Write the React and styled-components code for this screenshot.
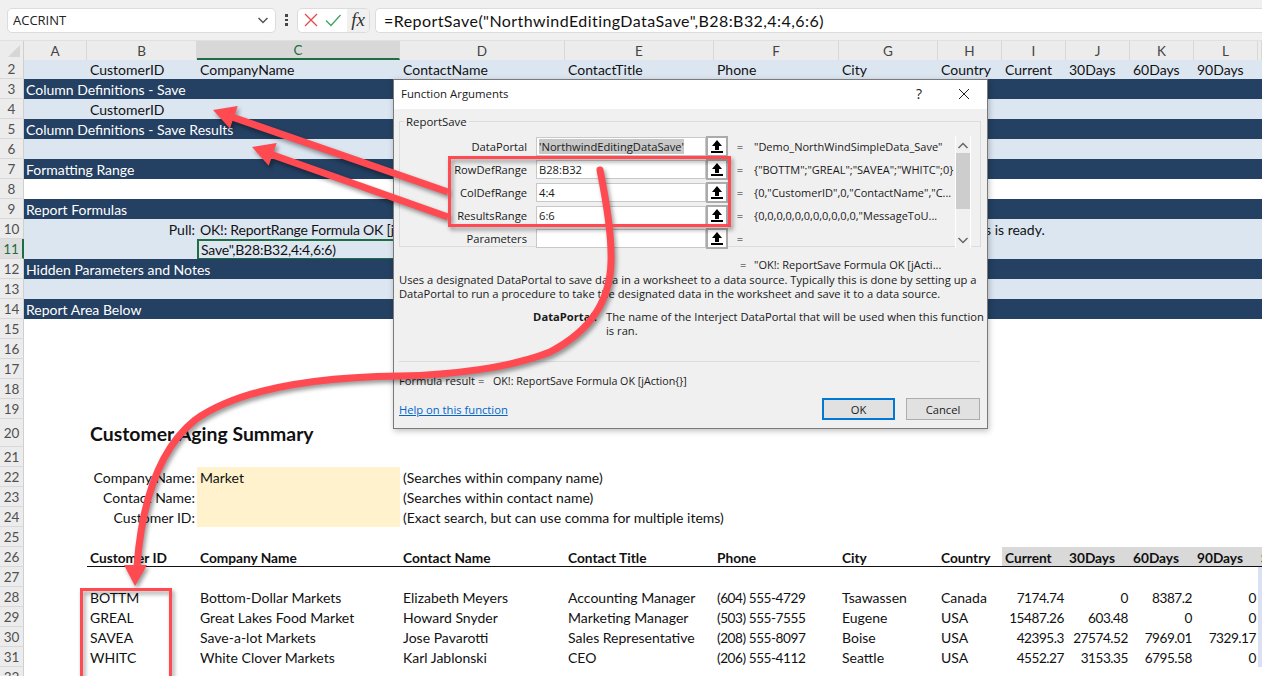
import React from "react";
import styled, { createGlobalStyle } from "styled-components";

const sheetFont = `"Lato", "Carlito", sans-serif`;
const uiFont = `"Open Sans", "Noto Sans", sans-serif`;

const GlobalStyle = createGlobalStyle`
  html, body {
    margin: 0;
    padding: 0;
    background: #fff;
  }
  #root {
    width: 1262px;
    height: 676px;
  }
`;

const Page = styled.div`
  position: relative;
  width: 1262px;
  height: 676px;
  overflow: hidden;
  background: #fff;
  font-family: ${sheetFont};
  font-size: 14px;
  color: #111;
`;

/* formula bar */

const FormulaBar = styled.div`
  display: flex;
  align-items: center;
  height: 40px;
  padding-left: 7px;
  background: #f0f0f0;
`;

const NameBox = styled.div`
  display: flex;
  align-items: center;
  justify-content: space-between;
  box-sizing: border-box;
  width: 269px;
  height: 25px;
  padding: 0 5px 0 5px;
  background: #fff;
  border: 1px solid #dcdcdc;
  border-radius: 5px;
  font-family: ${uiFont};
  font-size: 13px;
  color: #222;
`;

const MoreDots = styled.div`
  display: flex;
  flex-direction: column;
  gap: 2px;
  width: 21px;
  align-items: center;

  i {
    display: block;
    width: 2.5px;
    height: 2.5px;
    background: #444;
  }
`;

const EditButtons = styled.div`
  display: flex;
  align-items: center;
  box-sizing: border-box;
  width: 73px;
  height: 25px;
  padding-left: 5px;
  background: #fff;
  border: 1px solid #dcdcdc;
  border-radius: 5px;
  overflow: hidden;
`;

const EditIcon = styled.svg`
  width: 16px;
  height: 16px;
  margin-right: 6px;
  flex: none;
`;

const FxButton = styled.div`
  display: flex;
  align-items: center;
  justify-content: center;
  flex: 1;
  height: 100%;
  background: #f0f0f0;
  font-family: "Liberation Serif", serif;
  font-style: italic;
  font-size: 19px;
  color: #333;
`;

const FormulaInput = styled.div`
  display: flex;
  align-items: center;
  box-sizing: border-box;
  flex: 1;
  height: 25px;
  margin-left: 5px;
  padding-left: 8px;
  background: #fff;
  border: 1px solid #dcdcdc;
  border-right: 0;
  border-radius: 5px 0 0 5px;
  font-size: 16px;
  letter-spacing: 0.43px;
`;

/* worksheet */

const colTemplate = "63px 110px 203px 165px 149px 125px 99px 64px 64px 64px 64px 64px 1fr";

const ColumnHeads = styled.div`
  display: flex;
  height: 20px;
  background: #ececec;
  border-top: 1px solid #e0e0e0;
  box-sizing: border-box;
`;

const Corner = styled.div`
  position: relative;
  width: 24px;
  flex: none;
  border-right: 1px solid #cfcfcf;
  box-sizing: border-box;

  &::after {
    content: "";
    position: absolute;
    right: 3px;
    bottom: 3px;
    border-style: solid;
    border-width: 0 0 12px 12px;
    border-color: transparent transparent #d6d6d6 transparent;
  }
`;

const ColumnGrid = styled.div`
  flex: 1;
  display: grid;
  grid-template-columns: ${colTemplate};
`;

const ColumnHead = styled.div`
  display: flex;
  align-items: center;
  justify-content: center;
  box-sizing: border-box;
  border-right: 1px solid #d8d8d8;
  background: ${(p) => (p.$active ? "#d8d8d8" : "transparent")};
  color: ${(p) => (p.$active ? "#1f6e43" : "#444")};
  border-bottom: ${(p) => (p.$active ? "2px solid #1f6e43" : "0")};
  font-size: 13.5px;
`;

const RowLine = styled.div`
  display: flex;
  height: ${(p) => p.$h || 20}px;
`;

const RowNum = styled.div`
  display: flex;
  align-items: center;
  justify-content: center;
  box-sizing: border-box;
  width: 24px;
  flex: none;
  background: ${(p) => (p.$active ? "#dedede" : "#ececec")};
  border-bottom: 1px solid #d8d8d8;
  border-right: ${(p) => (p.$active ? "2px solid #1f6e43" : "1px solid #cfcfcf")};
  color: ${(p) => (p.$active ? "#1f6e43" : "#505050")};
  font-size: 13.5px;
`;

const tones = {
  light: { bg: "#dce6f1", fg: "#111" },
  dark: { bg: "#244062", fg: "#fff" },
  plain: { bg: "#fff", fg: "#111" },
};

const CellGrid = styled.div`
  flex: 1;
  display: grid;
  grid-template-columns: ${colTemplate};
  background: ${(p) => tones[p.$tone || "plain"].bg};
  color: ${(p) => tones[p.$tone || "plain"].fg};
`;

const Cell = styled.div`
  grid-column: ${(p) => p.$col} / span ${(p) => p.$span || 1};
  grid-row: 1;
  display: flex;
  align-items: center;
  justify-content: ${(p) => (p.$right ? "flex-end" : "flex-start")};
  box-sizing: border-box;
  min-width: 0;
  padding: 1px 2px 0 3px;
  white-space: nowrap;
  letter-spacing: ${(p) => (p.$tight ? "-0.45px" : "0")};
  font-size: ${(p) => (p.$tight ? "13.6px" : "inherit")};
`;

const FieldCell = styled(Cell)`
  padding-top: 0;
`;

const BandCell = styled(Cell)`
  padding-left: 2px;
`;

const PullCell = styled(Cell)`
  letter-spacing: -0.2px;
`;

const TailCell = styled(Cell)`
  padding-left: 47px;
`;

const InputCell = styled(Cell)`
  background: #fff2cc;
`;

const SelectedCell = styled(Cell)`
  border: 2px solid #1f6e43;
  padding: 0 0 0 2px;
  letter-spacing: -0.2px;
`;

const Title = styled(Cell)`
  font-weight: 700;
  font-size: 19.4px;
`;

const HeaderCell = styled(Cell)`
  padding-top: 2px;
  font-weight: 700;
  font-size: 13.7px;
  border-bottom: 1px solid #111;
  background: ${(p) => (p.$shaded ? "#d9d9d9" : "transparent")};
  overflow: hidden;
`;

const Sliver = styled(Cell)`
  background: #d9e1f2;
  padding: 0;
`;

/* function arguments dialog */

const Dialog = styled.div`
  position: absolute;
  left: 393px;
  top: 79px;
  box-sizing: border-box;
  width: 595px;
  height: 350px;
  background: #f0f0f0;
  border: 1px solid #7a7a7a;
  box-shadow: 1px 2px 6px rgba(0, 0, 0, 0.25);
  font-family: ${uiFont};
  font-size: 11.2px;
  color: #1a1a1a;
`;

const TitleBar = styled.div`
  display: flex;
  align-items: center;
  justify-content: space-between;
  box-sizing: border-box;
  height: 29px;
  padding: 0 17px 2px 7px;
  background: #fff;
  font-size: 11.4px;
`;

const TitleTools = styled.div`
  display: flex;
  align-items: center;
  gap: 36px;
  font-size: 14px;
`;

const ArgsBox = styled.fieldset`
  position: relative;
  box-sizing: border-box;
  width: 582px;
  height: 133px;
  margin: 5px 0 0 5px;
  padding: 6px 0 0;
  border: 1px solid #dcdcdc;

  legend {
    margin-left: 4px;
    padding: 0 2px;
    font-size: 11.4px;
  }
`;

const ArgRow = styled.div`
  display: grid;
  grid-template-columns: 136px 170px 22px 26px 1fr;
  align-items: center;
  height: 23px;
`;

const ArgLabel = styled.div`
  padding-right: 9px;
  text-align: right;
  white-space: nowrap;
`;

const ArgInput = styled.div`
  box-sizing: border-box;
  height: 19px;
  padding: 0 2px;
  background: #fff;
  border: 1px solid #c8c8c8;
  line-height: 17px;
  white-space: nowrap;
  overflow: hidden;
`;

const Selection = styled.span`
  background: #c8c8c8;
`;

const RefButton = styled.div`
  display: flex;
  align-items: center;
  justify-content: center;
  box-sizing: border-box;
  height: 21px;
  background: #fff;
  border: 2px solid #ababab;
`;

const EqualSign = styled.div`
  text-align: center;
  transform: translateX(-1px);
`;

const ArgValue = styled.div`
  white-space: nowrap;
  font-size: 11px;
`;

const ScrollTrack = styled.div`
  position: absolute;
  left: 555px;
  top: 7px;
  display: flex;
  flex-direction: column;
  justify-content: space-between;
  align-items: center;
  box-sizing: border-box;
  width: 16px;
  height: 112px;
  padding: 3px 0 1px;
  background: #f0f0f0;
  border-left: 1px solid #fff;
  border-right: 1px solid #fff;
`;

const ScrollThumb = styled.div`
  position: absolute;
  left: 0;
  top: 17px;
  width: 14px;
  height: 56px;
  background: #cdcdcd;
`;

const ResultLine = styled.div`
  display: grid;
  grid-template-columns: 340px 14px 1fr;
  margin: 10px 0 0 6px;
  height: 16px;
  line-height: 16px;
  white-space: nowrap;
  font-size: 11px;
`;

const Description = styled.p`
  margin: 0;
  padding: 0 0 0 5px;
  line-height: 14px;
`;

const HelpBlock = styled.div`
  display: grid;
  grid-template-columns: 203px 1fr;
  column-gap: 9px;
  margin-top: 9px;
  line-height: 14px;
  white-space: nowrap;

  b {
    text-align: right;
  }
`;

const Divider = styled.div`
  height: 1px;
  margin: 23px 7px 0 5px;
  background: #dcdcdc;
`;

const FormulaResult = styled.div`
  display: grid;
  grid-template-columns: 94px 1fr;
  margin: 12px 0 0 5px;
  line-height: 14px;
`;

const ResultText = styled.span`
  font-size: 10.7px;
`;

const Footer = styled.div`
  display: flex;
  align-items: center;
  margin: 10px 7px 0 5px;
`;

const HelpLink = styled.a`
  flex: 1;
  color: #0066cc;
  text-decoration: underline;
`;

const Button = styled.div`
  display: flex;
  align-items: center;
  justify-content: center;
  box-sizing: border-box;
  width: ${(p) => (p.$primary ? 73 : 74)}px;
  height: 22px;
  margin-left: ${(p) => (p.$primary ? 0 : 11)}px;
  background: #e1e1e1;
  border: ${(p) => (p.$primary ? "2px solid #0078d4" : "1px solid #adadad")};
`;

/* callouts drawn over the sheet */

const Callouts = styled.svg`
  position: absolute;
  left: 0;
  top: 0;
  width: 1262px;
  height: 676px;
  pointer-events: none;
  filter: drop-shadow(2px 3px 2px rgba(0, 0, 0, 0.4));
`;

const RED = "#ff4a52";

const RefArrow = () => (
  <svg width="14" height="15" viewBox="0 0 14 15">
    <path d="M7 1 L12 7 H9 V11 H5 V7 H2 Z" fill="#000" />
    <rect x="1" y="12" width="12" height="2" fill="#000" />
  </svg>
);

const Chevron = ({ up, color = "#555", size = 14 }) => (
  <svg width={size} height={size} viewBox="0 0 14 14">
    <path
      d={up ? "M2.5 9 L7 4.5 L11.5 9" : "M2.5 5 L7 9.5 L11.5 5"}
      fill="none"
      stroke={color}
      strokeWidth="1.5"
    />
  </svg>
);

const columns = "ABCDEFGHIJKLM".split("");

const fieldNames = [
  [2, "CustomerID"],
  [3, "CompanyName"],
  [4, "ContactName"],
  [5, "ContactTitle"],
  [6, "Phone"],
  [7, "City"],
  [8, "Country"],
  [9, "Current"],
  [10, "30Days"],
  [11, "60Days"],
  [12, "90Days"],
];

const reportHeads = [
  [2, "Customer ID"],
  [3, "Company Name"],
  [4, "Contact Name"],
  [5, "Contact Title"],
  [6, "Phone"],
  [7, "City"],
  [8, "Country"],
  [9, "Current"],
  [10, "30Days"],
  [11, "60Days"],
  [12, "90Days"],
  [13, "Sum"],
];

const customers = [
  ["BOTTM", "Bottom-Dollar Markets", "Elizabeth Meyers", "Accounting Manager", "(604) 555-4729", "Tsawassen", "Canada", "7174.74", "0", "8387.2", "0"],
  ["GREAL", "Great Lakes Food Market", "Howard Snyder", "Marketing Manager", "(503) 555-7555", "Eugene", "USA", "15487.26", "603.48", "0", "0"],
  ["SAVEA", "Save-a-lot Markets", "Jose Pavarotti", "Sales Representative", "(208) 555-8097", "Boise", "USA", "42395.3", "27574.52", "7969.01", "7329.17"],
  ["WHITC", "White Clover Markets", "Karl Jablonski", "CEO", "(206) 555-4112", "Seattle", "USA", "4552.27", "3153.35", "6795.58", "0"],
];

const searches = [
  [22, "Company Name:", "Market", "(Searches within company name)"],
  [23, "Contact Name:", "", "(Searches within contact name)"],
  [24, "Customer ID:", "", "(Exact search, but can use comma for multiple items)"],
];

const args = [
  ["DataPortal", <Selection key="s">'NorthwindEditingDataSave'</Selection>, '"Demo_NorthWindSimpleData_Save"'],
  ["RowDefRange", "B28:B32", '{"BOTTM";"GREAL";"SAVEA";"WHITC";0}'],
  ["ColDefRange", "4:4", '{0,"CustomerID",0,"ContactName","C...'],
  ["ResultsRange", "6:6", '{0,0,0,0,0,0,0,0,0,0,0,"MessageToU...'],
  ["Parameters", "", ""],
];

const Row = ({ num, tone, h, active, children }) => (
  <RowLine $h={h}>
    <RowNum $active={active}>{num}</RowNum>
    <CellGrid $tone={tone}>{children}</CellGrid>
  </RowLine>
);

const Band = ({ num, children }) => (
  <Row num={num} tone="dark">
    <BandCell $col={1} $span={4}>{children}</BandCell>
  </Row>
);

export default function App() {
  return (
    <Page>
      <GlobalStyle />

      <FormulaBar>
        <NameBox>
          ACCRINT
          <Chevron />
        </NameBox>
        <MoreDots>
          <i />
          <i />
          <i />
        </MoreDots>
        <EditButtons>
          <EditIcon viewBox="0 0 16 16">
            <path d="M2 2 L14 14 M14 2 L2 14" stroke="#e8484a" strokeWidth="1.3" fill="none" />
          </EditIcon>
          <EditIcon viewBox="0 0 16 16">
            <path d="M1 8.5 L6 13.5 L15.5 3" stroke="#3fa35f" strokeWidth="1.3" fill="none" />
          </EditIcon>
          <FxButton>fx</FxButton>
        </EditButtons>
        <FormulaInput>=ReportSave("NorthwindEditingDataSave",B28:B32,4:4,6:6)</FormulaInput>
      </FormulaBar>

      <ColumnHeads>
        <Corner />
        <ColumnGrid>
          {columns.map((c) => (
            <ColumnHead key={c} $active={c === "C"}>{c === "M" ? "" : c}</ColumnHead>
          ))}
        </ColumnGrid>
      </ColumnHeads>

      <Row num={2} tone="light" h={19}>
        {fieldNames.map(([col, text]) => (
          <FieldCell key={text} $col={col}>{text}</FieldCell>
        ))}
      </Row>
      <Band num={3}>Column Definitions - Save</Band>
      <Row num={4} tone="light">
        <Cell $col={2}>CustomerID</Cell>
      </Row>
      <Band num={5}>Column Definitions - Save Results</Band>
      <Row num={6} tone="light" />
      <Band num={7}>Formatting Range</Band>
      <Row num={8} />
      <Band num={9}>Report Formulas</Band>
      <Row num={10} tone="light">
        <Cell $col={2} $right>Pull:</Cell>
        <PullCell $col={3} $span={2}>OK!: ReportRange Formula OK [jAction{"{}"}]</PullCell>
        <TailCell $col={8} $span={2}>s is ready.</TailCell>
      </Row>
      <Row num={11} tone="light" active>
        <SelectedCell $col={3}>Save",B28:B32,4:4,6:6)</SelectedCell>
      </Row>
      <Band num={12}>Hidden Parameters and Notes</Band>
      <Row num={13} tone="light" />
      <Band num={14}>Report Area Below</Band>
      {[15, 16, 17, 18, 19].map((n) => (
        <Row key={n} num={n} />
      ))}
      <Row num={20} h={28}>
        <Title $col={2} $span={3}>Customer Aging Summary</Title>
      </Row>
      <Row num={21} />
      {searches.map(([num, label, value, hint]) => (
        <Row key={num} num={num}>
          <Cell $col={2} $right>{label}</Cell>
          <InputCell $col={3}>{value}</InputCell>
          <Cell $col={4} $span={4}>{hint}</Cell>
        </Row>
      ))}
      <Row num={25} />
      <Row num={26}>
        {reportHeads.map(([col, text]) => (
          <HeaderCell key={text} $col={col} $shaded={col > 8}>{text}</HeaderCell>
        ))}
      </Row>
      <Row num={27}>
        <Sliver $col={13} />
      </Row>
      {customers.map((values, i) => (
        <Row key={values[0]} num={28 + i}>
          {values.map((v, j) => (
            <Cell key={j} $col={j + 2} $right={j > 6} $tight={j > 6 || j === 4}>{v}</Cell>
          ))}
          <Sliver $col={13} />
        </Row>
      ))}
      <Row num={32} />

      <Dialog>
        <TitleBar>
          Function Arguments
          <TitleTools>
            ?
            <svg width="12" height="12" viewBox="0 0 12 12">
              <path d="M1 1 L11 11 M11 1 L1 11" stroke="#222" strokeWidth="1" fill="none" />
            </svg>
          </TitleTools>
        </TitleBar>
        <ArgsBox>
          <legend>ReportSave</legend>
          {args.map(([label, input, value]) => (
            <ArgRow key={label}>
              <ArgLabel>{label}</ArgLabel>
              <ArgInput>{input}</ArgInput>
              <RefButton>
                <RefArrow />
              </RefButton>
              <EqualSign>=</EqualSign>
              <ArgValue>{value}</ArgValue>
            </ArgRow>
          ))}
          <ScrollTrack>
            <ScrollThumb />
            <Chevron up color="#666" />
            <Chevron color="#666" />
          </ScrollTrack>
        </ArgsBox>
        <ResultLine>
          <span />
          <span>=</span>
          <span>"OK!: ReportSave Formula OK [jActi...</span>
        </ResultLine>
        <Description>
          Uses a designated DataPortal to save data in a worksheet to a data source. Typically this is done by setting up a
          <br />
          DataPortal to run a procedure to take the designated data in the worksheet and save it to a data source.
        </Description>
        <HelpBlock>
          <b>DataPortal:</b>
          <span>
            The name of the Interject DataPortal that will be used when this function
            <br />
            is ran.
          </span>
        </HelpBlock>
        <Divider />
        <FormulaResult>
          <span>Formula result =</span>
          <ResultText>OK!: ReportSave Formula OK [jAction{"{}"}]</ResultText>
        </FormulaResult>
        <Footer>
          <HelpLink>Help on this function</HelpLink>
          <Button $primary>OK</Button>
          <Button>Cancel</Button>
        </Footer>
      </Dialog>

      <Callouts viewBox="0 0 1262 676">
        <rect x="449.5" y="157.5" width="280" height="68" fill="none" stroke={RED} strokeWidth="3" />
        <rect x="81.5" y="589.5" width="89" height="90" fill="none" stroke={RED} strokeWidth="3" />
        <path d="M448 192 L232 117" fill="none" stroke={RED} strokeWidth="7" />
        <polygon points="213,110 237.7,105.9 229.9,128.5" fill={RED} />
        <path d="M448 217 L270 154" fill="none" stroke={RED} strokeWidth="7" />
        <polygon points="252,147 276.7,143.1 268.7,165.7" fill={RED} />
        <path
          d="M600 170 C606 200 612 235 611 262 C610 300 592 330 550 352 C510 368 450 375 400 376 C320 377 240 388 195 420 C160 448 142 500 137 566"
          fill="none"
          stroke={RED}
          strokeWidth="7"
          strokeLinecap="round"
        />
        <polygon points="135,586 124,565 147,565" fill={RED} />
      </Callouts>
    </Page>
  );
}
